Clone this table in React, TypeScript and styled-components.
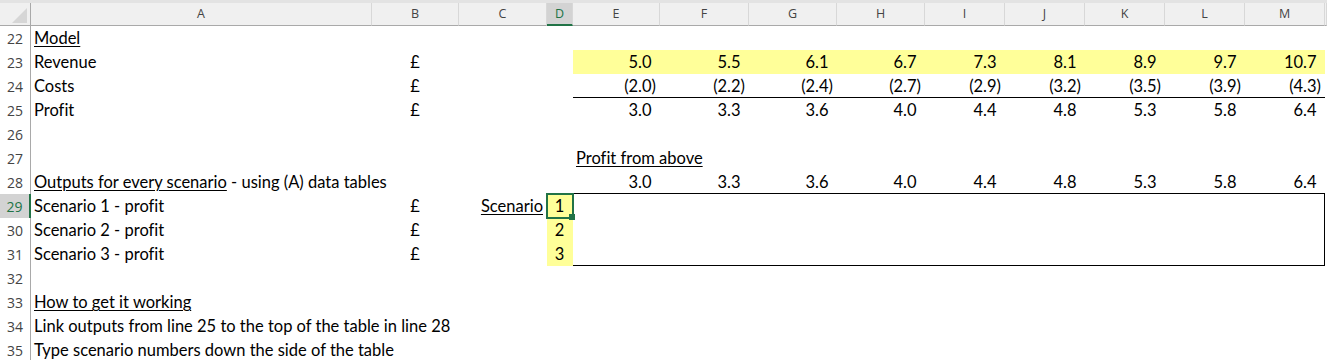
import React from 'react';
import styled, { createGlobalStyle } from 'styled-components';

const GlobalStyle = createGlobalStyle`
    html, body {
        margin: 0;
        padding: 0;
        background: #ffffff;
        overflow: hidden;
    }
`;

const EXCEL_GREEN = '#217346';
const FILL_YELLOW = '#ffff99';

// column widths in px: row numbers, then A..M
const COL_WIDTHS = [31, 341, 87, 88, 26, 87, 89, 88, 88, 80, 80, 80, 80, 80];
const LETTERS = ['A', 'B', 'C', 'D', 'E', 'F', 'G', 'H', 'I', 'J', 'K', 'L', 'M'];
const FIRST_ROW = 22;
const LAST_ROW = 35;

const col = (letter: string) => LETTERS.indexOf(letter) + 2;
const row = (n: number) => n - FIRST_ROW + 2;

const Window = styled.div`
    width: 1327px;
    height: 360px;
    overflow: hidden;
    background: #ffffff;
`;

const TopStrip = styled.div`
    height: 3px;
    background: #e3e3e3;
`;

const Sheet = styled.div`
    display: grid;
    grid-template-columns: ${COL_WIDTHS.map((w) => `${w}px`).join(' ')} 1fr;
    grid-template-rows: 23px;
    grid-auto-rows: 24px;
`;

const Corner = styled.div`
    grid-column: 1;
    grid-row: 1;
    background: #f0f0f0;
    border-right: 1px solid #a9a9a9;
    border-bottom: 1px solid #a9a9a9;
    box-sizing: border-box;
    display: flex;
    align-items: flex-end;
    justify-content: flex-end;
    padding: 0 3px 2px 0;

    svg {
        display: block;
    }
`;

const ColHeader = styled.div<{ $c: number; $active?: boolean }>`
    grid-column: ${(p) => p.$c};
    grid-row: 1;
    box-sizing: border-box;
    background: ${(p) => (p.$active ? '#d3d3d3' : '#f0f0f0')};
    border-right: 1px solid #d8d8d8;
    border-bottom: ${(p) => (p.$active ? `2px solid ${EXCEL_GREEN}` : '1px solid #a9a9a9')};
    font-family: 'Open Sans', 'Noto Sans', sans-serif;
    font-size: 12.5px;
    line-height: 22px;
    color: ${(p) => (p.$active ? EXCEL_GREEN : '#444444')};
    text-align: center;
`;

const RowHeader = styled.div<{ $r: number; $active?: boolean }>`
    grid-column: 1;
    grid-row: ${(p) => p.$r};
    box-sizing: border-box;
    background: ${(p) => (p.$active ? '#d3d3d3' : '#ffffff')};
    border-right: ${(p) => (p.$active ? `2px solid ${EXCEL_GREEN}` : '1px solid #a9a9a9')};
    font-family: 'Open Sans', 'Noto Sans', sans-serif;
    font-size: 14px;
    line-height: 24px;
    padding-top: 1px;
    color: ${(p) => (p.$active ? EXCEL_GREEN : '#444444')};
    text-align: center;
`;

type Align = 'left' | 'right' | 'center';

const Cell = styled.div<{ $c: number; $r: number; $align?: Align; $fill?: string; $ruled?: boolean }>`
    grid-column: ${(p) => p.$c};
    grid-row: ${(p) => p.$r};
    position: relative;
    box-sizing: border-box;
    padding: 0 4px 0 3px;
    background: ${(p) => p.$fill || 'transparent'};
    border-bottom: ${(p) => (p.$ruled ? '1px solid #000000' : 'none')};
    font-family: Lato, 'Liberation Sans', sans-serif;
    font-size: 16.5px;
    font-variant-ligatures: none;
    line-height: 24px;
    color: #000000;
    white-space: nowrap;
    text-align: ${(p) => p.$align || 'left'};
    overflow: visible;
`;

const Underlined = styled.span`
    text-decoration: underline;
    text-decoration-thickness: 1px;
    text-underline-offset: 2px;
`;

// Excel's "_)" keeps positive numbers lined up with bracketed negatives
const ParenSpace = styled.span`
    visibility: hidden;
`;

const TableBox = styled.div`
    grid-column: ${col('E')} / ${col('M') + 1};
    grid-row: ${row(29)} / ${row(31) + 1};
    margin: -1px 0 0 -1px;
    border: 1px solid #000000;
    pointer-events: none;
`;

const Selection = styled.div`
    position: absolute;
    top: -1px;
    left: -1px;
    right: -1px;
    bottom: -1px;
    border: 2px solid ${EXCEL_GREEN};
    z-index: 2;
`;

const FillHandle = styled.div`
    position: absolute;
    right: -3px;
    bottom: -3px;
    width: 6px;
    height: 6px;
    background: ${EXCEL_GREEN};
`;

const revenue = [5.0, 5.5, 6.1, 6.7, 7.3, 8.1, 8.9, 9.7, 10.7];
const costs = [-2.0, -2.2, -2.4, -2.7, -2.9, -3.2, -3.5, -3.9, -4.3];
const profit = [3.0, 3.3, 3.6, 4.0, 4.4, 4.8, 5.3, 5.8, 6.4];
const valueCols = ['E', 'F', 'G', 'H', 'I', 'J', 'K', 'L', 'M'];

const Num: React.FC<{ value: number }> = ({ value }) =>
    value < 0 ? (
        <>({Math.abs(value).toFixed(1)})</>
    ) : (
        <>
            {value.toFixed(1)}
            <ParenSpace>)</ParenSpace>
        </>
    );

const NumberRow: React.FC<{ r: number; values: number[]; fill?: string; ruled?: boolean }> = ({ r, values, fill, ruled }) => (
    <>
        {values.map((v, i) => (
            <Cell key={valueCols[i]} $c={col(valueCols[i])} $r={row(r)} $align="right" $fill={fill} $ruled={ruled}>
                <Num value={v} />
            </Cell>
        ))}
    </>
);

const App: React.FC = () => {
    const rowNumbers = [];
    for (let n = FIRST_ROW; n <= LAST_ROW; n++) rowNumbers.push(n);

    return (
        <Window>
            <GlobalStyle />
            <TopStrip />
            <Sheet>
                <Corner>
                    <svg width="15" height="15" viewBox="0 0 15 15">
                        <polygon points="15,0 15,15 0,15" fill="#d6d6d6" />
                    </svg>
                </Corner>
                {LETTERS.map((l) => (
                    <ColHeader key={l} $c={col(l)} $active={l === 'D'}>
                        {l}
                    </ColHeader>
                ))}
                <ColHeader $c={LETTERS.length + 2} />

                {rowNumbers.map((n) => (
                    <RowHeader key={n} $r={row(n)} $active={n === 29}>
                        {n}
                    </RowHeader>
                ))}

                <Cell $c={col('A')} $r={row(22)}>
                    <Underlined>Model</Underlined>
                </Cell>

                <Cell $c={col('A')} $r={row(23)}>Revenue</Cell>
                <Cell $c={col('B')} $r={row(23)} $align="center">£</Cell>
                <NumberRow r={23} values={revenue} fill={FILL_YELLOW} />

                <Cell $c={col('A')} $r={row(24)}>Costs</Cell>
                <Cell $c={col('B')} $r={row(24)} $align="center">£</Cell>
                <NumberRow r={24} values={costs} ruled />

                <Cell $c={col('A')} $r={row(25)}>Profit</Cell>
                <Cell $c={col('B')} $r={row(25)} $align="center">£</Cell>
                <NumberRow r={25} values={profit} />

                <Cell $c={col('E')} $r={row(27)}>
                    <Underlined>Profit from above</Underlined>
                </Cell>

                <Cell $c={col('A')} $r={row(28)}>
                    <Underlined>Outputs for every scenario</Underlined> - using (A) data tables
                </Cell>
                <NumberRow r={28} values={profit} />

                {[1, 2, 3].map((s) => (
                    <React.Fragment key={s}>
                        <Cell $c={col('A')} $r={row(28 + s)}>Scenario {s} - profit</Cell>
                        <Cell $c={col('B')} $r={row(28 + s)} $align="center">£</Cell>
                        <Cell $c={col('D')} $r={row(28 + s)} $align="center" $fill={FILL_YELLOW}>
                            {s}
                            {s === 1 && (
                                <Selection>
                                    <FillHandle />
                                </Selection>
                            )}
                        </Cell>
                    </React.Fragment>
                ))}
                <Cell $c={col('C')} $r={row(29)} $align="right">
                    <Underlined>Scenario</Underlined>
                </Cell>
                <TableBox />

                <Cell $c={col('A')} $r={row(33)}>
                    <Underlined>How to get it working</Underlined>
                </Cell>
                <Cell $c={col('A')} $r={row(34)}>Link outputs from line 25 to the top of the table in line 28</Cell>
                <Cell $c={col('A')} $r={row(35)}>Type scenario numbers down the side of the table</Cell>
            </Sheet>
        </Window>
    );
};

export default App;
